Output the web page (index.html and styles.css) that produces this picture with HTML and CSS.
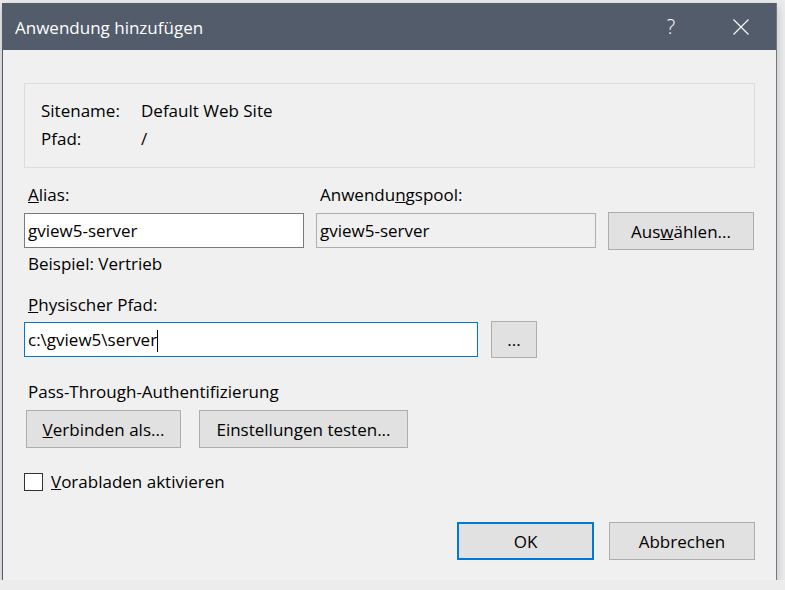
FILE: index.html
```html
<!DOCTYPE html>
<html lang="de">
<head>
<meta charset="utf-8">
<title>Anwendung hinzufügen</title>
<link rel="stylesheet" href="styles.css">
</head>
<body>
<div class="page">
  <div class="window">
    <div class="titlebar">
      <span class="title">Anwendung hinzufügen</span>
      <span class="caption-btn help">?</span>
      <span class="caption-btn close">
        <svg width="16" height="16" viewBox="0 0 16 16"><path d="M0.5 0.5 L15.5 15.5 M15.5 0.5 L0.5 15.5" stroke="#ffffff" stroke-width="1.1" fill="none"/></svg>
      </span>
    </div>
    <div class="content">
      <div class="groupbox">
        <div class="info-row"><span class="info-label">Sitename:</span><span>Default Web Site</span></div>
        <div class="info-row"><span class="info-label">Pfad:</span><span>/</span></div>
      </div>

      <div class="alias-grid">
        <div class="field-label"><u>A</u>lias:</div>
        <div class="field-label">Anwendu<u>n</u>gspool:</div>
        <div></div>
        <div class="textbox">gview5-server</div>
        <div class="textbox readonly">gview5-server</div>
        <button class="btn btn-select">Aus<u>w</u>ählen...</button>
        <div class="hint">Beispiel: Vertrieb</div>
      </div>

      <div class="field-label path-label"><u>P</u>hysischer Pfad:</div>
      <div class="path-row">
        <div class="textbox focused">c:\gview5\server<span class="caret"></span></div>
        <button class="btn btn-browse">...</button>
      </div>

      <div class="field-label pass-label">Pass-Through-Authentifizierung</div>
      <div class="pass-buttons">
        <button class="btn btn-connect"><u>V</u>erbinden als...</button>
        <button class="btn btn-test">Einstellun<u>g</u>en testen...</button>
      </div>

      <div class="checkbox-row">
        <span class="checkbox"></span>
        <span><u>V</u>orabladen aktivieren</span>
      </div>

      <div class="footer">
        <button class="btn btn-ok">OK</button>
        <button class="btn btn-cancel">Abbrechen</button>
      </div>
    </div>
  </div>
</div>
</body>
</html>
```

FILE: styles.css
```css
html, body {
  margin: 0;
}
body {
  background: #ececec;
  font-family: "Open Sans", "Noto Sans", sans-serif;
  font-size: 17px;
  color: #000;
}
.page {
  padding: 3px 0 0 2px;
}
.window {
  width: 775px;
  height: 577px;
  box-sizing: border-box;
  background: #f0f0f0;
  border-left: 1px solid #525c6a;
  border-right: 1px solid #6f7885;
  display: flex;
  flex-direction: column;
  box-shadow: 0 3px 10px rgba(0, 0, 0, 0.2);
}
.titlebar {
  height: 47px;
  flex: none;
  background: #525c6a;
  color: #fff;
  display: flex;
  align-items: center;
}
.title {
  flex: 1;
  padding-left: 12px;
  padding-top: 2px;
  line-height: 24px;
}
.caption-btn {
  width: 70px;
  display: flex;
  justify-content: center;
  align-items: center;
}
.help {
  font-weight: 300;
  font-size: 20px;
  line-height: 24px;
}
.close svg {
  display: block;
}
.content {
  flex: 1;
  padding: 33px 21px 20px;
  display: flex;
  flex-direction: column;
}
.groupbox {
  border: 1px solid #dcdcdc;
  padding: 13px 16px 14px;
}
.info-row {
  display: flex;
  line-height: 28px;
}
.info-label {
  width: 100px;
}
.field-label {
  line-height: 24px;
  padding-left: 4px;
}
.alias-grid {
  display: grid;
  grid-template-columns: 280px 280px 146px;
  column-gap: 12px;
  margin-top: 15px;
}
.textbox {
  height: 35px;
  box-sizing: border-box;
  border: 1px solid #7a7a7a;
  background: #fff;
  padding: 0 3px;
  line-height: 33px;
  white-space: nowrap;
}
.alias-grid .textbox {
  margin-top: 6px;
}
.textbox.readonly {
  background: #f0f0f0;
  border-color: #adadad;
}
.btn {
  font: inherit;
  color: #000;
  height: 38px;
  box-sizing: border-box;
  background: #e1e1e1;
  border: 1px solid #adadad;
  padding: 0;
  margin: 0;
}
.btn-select {
  margin-top: 5px;
  margin-bottom: -2px;
}
.hint {
  grid-column: 1 / -1;
  margin-top: 4px;
  padding-left: 4px;
  line-height: 24px;
}
.path-label {
  margin-top: 17px;
}
.path-row {
  display: flex;
  align-items: center;
  gap: 13px;
  margin-top: 4px;
}
.textbox.focused {
  width: 454px;
  border-color: #0078d7;
}
.caret {
  display: inline-block;
  width: 1px;
  height: 22px;
  background: #000;
  vertical-align: middle;
  margin-left: 0;
}
.btn-browse {
  width: 46px;
  height: 37px;
}
.pass-label {
  margin-top: 22px;
}
.pass-buttons {
  display: flex;
  gap: 18px;
  margin-top: 6px;
  padding-left: 2px;
}
.btn-connect {
  width: 155px;
}
.btn-test {
  width: 209px;
}
.checkbox-row {
  display: flex;
  align-items: center;
  gap: 8px;
  margin-top: 22px;
  line-height: 24px;
}
.checkbox {
  width: 19px;
  height: 18px;
  box-sizing: border-box;
  border: 1px solid #333;
  background: #fff;
}
.footer {
  display: flex;
  justify-content: flex-end;
  gap: 15px;
  margin-top: 28px;
}
.btn-ok {
  width: 137px;
  border: 2px solid #0078d7;
}
.btn-cancel {
  width: 146px;
}
```
